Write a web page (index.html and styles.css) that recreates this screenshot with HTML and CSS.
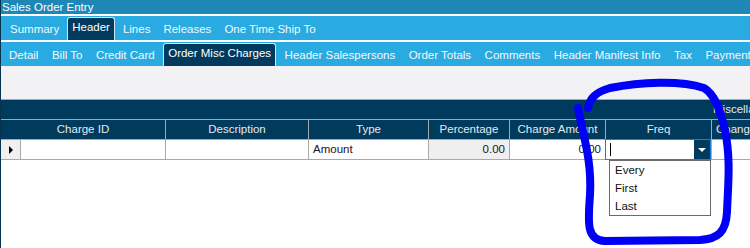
FILE: index.html
```html
<!DOCTYPE html>
<html lang="en">
<head>
  <meta charset="UTF-8">
  <title>Sales Order Entry</title>
  <link rel="stylesheet" href="styles.css">
</head>
<body>

<div class="app">
  <div class="title">Sales Order Entry</div>

  <div class="tabs main-tabs">
    <span class="tab">Summary</span>
    <span class="tab active">Header</span>
    <span class="tab">Lines</span>
    <span class="tab">Releases</span>
    <span class="tab">One Time Ship To</span>
  </div>

  <div class="tabs sub-tabs">
    <span class="tab">Detail</span>
    <span class="tab">Bill To</span>
    <span class="tab">Credit Card</span>
    <span class="tab active">Order Misc Charges</span>
    <span class="tab">Header Salespersons</span>
    <span class="tab">Order Totals</span>
    <span class="tab">Comments</span>
    <span class="tab">Header Manifest Info</span>
    <span class="tab">Tax</span>
    <span class="tab">Payments</span>
  </div>

  <div class="toolbar"></div>

  <div class="grid">
    <div class="caption">Miscellaneous Charges</div>

    <div class="row head">
      <div class="cell span2">Charge ID</div>
      <div class="cell">Description</div>
      <div class="cell">Type</div>
      <div class="cell">Percentage</div>
      <div class="cell">Charge Amount</div>
      <div class="cell">Freq</div>
      <div class="cell left">Change Type</div>
    </div>

    <div class="row data">
      <div class="cell selector"><span class="arrow"></span></div>
      <div class="cell"></div>
      <div class="cell"></div>
      <div class="cell">Amount</div>
      <div class="cell num readonly">0.00</div>
      <div class="cell num">0.00</div>
      <div class="cell freq">
        <div class="combo">
          <span class="caret"></span>
          <span class="drop-btn"><span class="down"></span></span>
          <ul class="drop-list">
            <li>Every</li>
            <li>First</li>
            <li>Last</li>
          </ul>
        </div>
      </div>
      <div class="cell"></div>
    </div>
  </div>
</div>

<!-- hand drawn markup around the Freq column -->
<svg class="markup" width="750" height="248" viewBox="0 0 750 248">
  <path d="M578 108 C583 135, 592 160, 590 195 C588 222, 586 240, 605 241 L700 240 C718 239, 726 232, 727 212 C728 185, 731 160, 725 130 C720 108, 714 94, 704 88 C680 80, 640 82, 610 88 C596 92, 590 98, 588 108"
        fill="none" stroke="#0000f5" stroke-width="8" stroke-linecap="round" stroke-linejoin="round"/>
</svg>

</body>
</html>
```

FILE: styles.css
```css
body { margin: 0; background: #fff; font-family: "Liberation Sans", Arial, sans-serif; font-size: 11.5px; overflow: hidden; }
.app { border-left: 1px solid #06344f; height: 248px; }
.title { height: 14px; line-height: 14px; padding-left: 1px; background: #1f87b6; color: #fff; border-bottom: 2px solid #fff; }

.tabs { display: flex; align-items: flex-end; gap: 3px; height: 24px; background: #29abe2; white-space: nowrap; overflow: hidden; }
.main-tabs { padding-left: 4px; border-bottom: 2px solid #fff; }
.sub-tabs { padding-left: 3px; gap: 3.5px; }
.tab { box-sizing: border-box; height: 23px; padding: 4px 4px 0; line-height: 14px; color: #f3f8fb; border: 1px solid transparent; border-bottom: 0; border-radius: 3px 3px 0 0; }
.tab.active { background: #003a5c; border-color: #d6e4ec; padding-top: 2px; color: #fff; }

.toolbar { height: 33px; background: #f2f2f4; }

.caption { box-sizing: border-box; height: 21px; line-height: 19px; padding-left: 712px; background: #003a5c; color: #e2ebf0; border-top: 1px solid #a3a8ac; border-bottom: 1px solid #a3a8ac; white-space: nowrap; overflow: hidden; }

.row { display: grid; grid-template-columns: 20px 145px 143px 120px 81px 96px 106px 1fr; box-sizing: border-box; height: 20px; border-bottom: 1px solid #a9a9a9; }
.cell { box-sizing: border-box; border-right: 1px solid #a9a9a9; line-height: 19px; white-space: nowrap; overflow: hidden; }
.head { background: #003a5c; color: #e2ebf0; }
.head .cell { text-align: center; border-right-color: #a3a8ac; }
.head .cell.left { text-align: left; padding-left: 4px; border-right: 0; }
.head .span2 { grid-column: span 2; }

.data { background: #fff; color: #1b1420; }
.data .cell { padding: 0 4px; }
.data .num { text-align: right; }
.data .readonly { background: #efefef; }
.data .cell:last-child { border-right: 0; }
.selector { background: #f0f0f0; position: relative; }
.arrow { position: absolute; left: 8px; top: 6px; border-top: 4px solid transparent; border-bottom: 4px solid transparent; border-left: 4px solid #000; }

.freq { overflow: visible; position: relative; }
.combo { position: absolute; left: -1px; top: -1px; right: 0; bottom: -1px; border: 1px solid #1a7fd6; background: #fff; }
.caret { position: absolute; left: 4px; top: 3px; width: 1px; height: 13px; background: #000; }
.drop-btn { position: absolute; right: 0; top: 0; width: 16px; height: 19px; background: #003a5c; }
.down { position: absolute; left: 4px; top: 8px; border-left: 4px solid transparent; border-right: 4px solid transparent; border-top: 4px solid #fff; }
.drop-list { position: absolute; left: 3px; top: 20px; width: 102px; height: 56px; box-sizing: border-box; margin: 0; padding: 0 0 0 5px; list-style: none; background: #fff; border: 1px solid #6b6b6b; color: #111; }
.drop-list li { height: 18px; line-height: 18px; }

.markup { position: absolute; left: 0; top: 0; pointer-events: none; }
```
